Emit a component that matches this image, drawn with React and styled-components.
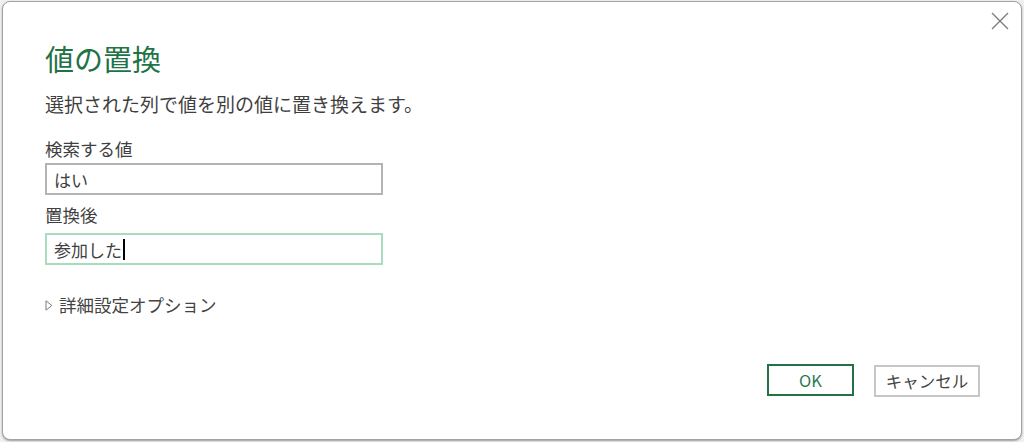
import styled, { createGlobalStyle } from 'styled-components'

const GlobalStyle = createGlobalStyle`
    html, body {
        margin: 0;
        padding: 0;
        background: #f0f0f0;
        font-family: "Noto Sans CJK JP", "Noto Sans", sans-serif;
    }
`

const Backdrop = styled.div`
    width: 1024px;
    height: 442px;
    box-sizing: border-box;
    padding: 1px 2px 2px 2px;
`

const Dialog = styled.section`
    position: relative;
    height: 100%;
    box-sizing: border-box;
    background: #fff;
    border: 1px solid #a3a3a3;
    border-radius: 8px;
    box-shadow: 0 1px 2px rgba(0, 0, 0, 0.35);
    padding: 38px 41px 42px 42px;
    display: flex;
    flex-direction: column;
    color: #3f3f3f;
`

const CloseButton = styled.button`
    position: absolute;
    top: 10px;
    right: 12px;
    width: 18px;
    height: 18px;
    padding: 0;
    border: none;
    background: none;
    display: flex;
    align-items: center;
    justify-content: center;
`

const Titulo = styled.h1`
    margin: 0;
    font-size: 29px;
    font-weight: 400;
    line-height: 36px;
    color: #217346;
`

const Descricao = styled.p`
    margin: 16px 0 0;
    font-size: 19px;
    line-height: 24px;
`

const Campo = styled.div`
    display: flex;
    flex-direction: column;
    margin-top: ${props => props.$gap}px;
`

const Rotulo = styled.label`
    font-size: 17.5px;
    line-height: 22px;
    margin-bottom: ${props => props.$gap}px;
`

const Caixa = styled.div`
    width: 338px;
    height: 32px;
    box-sizing: border-box;
    border: 2px solid ${props => (props.$focus ? '#a8dcbf' : '#b4b4b4')};
    padding: 0 7px;
    display: flex;
    align-items: center;
    font-size: 17px;
    color: #3f3f3f;
`

const Cursor = styled.span`
    display: inline-block;
    width: 2px;
    height: 21px;
    background: #000;
    margin-left: 1px;
`

const Avancado = styled.div`
    margin-top: 29px;
    display: flex;
    align-items: center;
    gap: 6px;
    font-size: 17.5px;
    line-height: 22px;
    color: #444;
`

const Rodape = styled.div`
    margin-top: auto;
    display: flex;
    justify-content: flex-end;
    align-items: center;
    gap: 20px;
`

const Botao = styled.button`
    height: 32px;
    width: ${props => props.$width}px;
    box-sizing: border-box;
    background: #fff;
    border: 2px solid ${props => (props.$primary ? '#217346' : '#c6c6c6')};
    color: ${props => (props.$primary ? '#2a7a55' : '#444')};
    font-family: "Noto Sans CJK JP", "Noto Sans", sans-serif;
    font-size: 16.5px;
    padding: 0;
    margin-top: ${props => (props.$primary ? 0 : 2)}px;
`

export default function App() {
    return (
        <Backdrop>
            <GlobalStyle />
            <Dialog>
                <CloseButton aria-label="閉じる">
                    <svg width="18" height="18" viewBox="0 0 18 18">
                        <path d="M1 1 L17 17 M17 1 L1 17" stroke="#7a7a7a" strokeWidth="1.3" fill="none" />
                    </svg>
                </CloseButton>
                <Titulo>値の置換</Titulo>
                <Descricao>選択された列で値を別の値に置き換えます。</Descricao>
                <Campo $gap={22}>
                    <Rotulo $gap={3}>検索する値</Rotulo>
                    <Caixa>はい</Caixa>
                </Campo>
                <Campo $gap={9}>
                    <Rotulo $gap={7}>置換後</Rotulo>
                    <Caixa $focus>
                        参加した<Cursor />
                    </Caixa>
                </Campo>
                <Avancado>
                    <svg width="8" height="11" viewBox="0 0 8 11">
                        <path d="M1 0.8 L6.8 5.5 L1 10.2 Z" stroke="#7a7a7a" strokeWidth="1" fill="none" />
                    </svg>
                    詳細設定オプション
                </Avancado>
                <Rodape>
                    <Botao $primary $width={87}>OK</Botao>
                    <Botao $width={106}>キャンセル</Botao>
                </Rodape>
            </Dialog>
        </Backdrop>
    )
}
